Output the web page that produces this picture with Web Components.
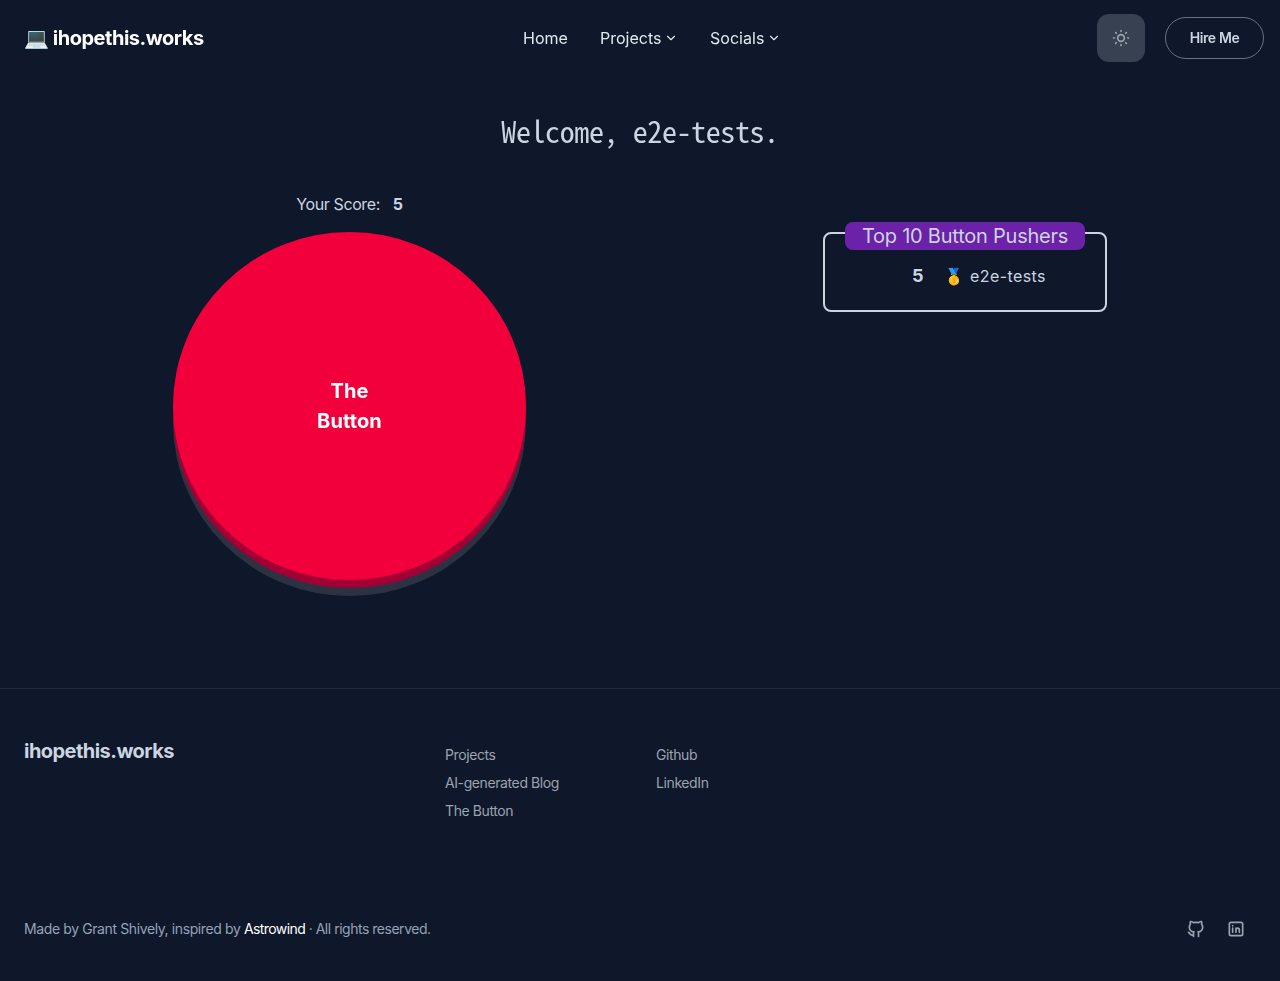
<!DOCTYPE html>
<html lang="en">
<head>
<meta charset="utf-8">
<title>The Button</title>
<style>
body{margin:0;background:#0f172a;color:#cbd5e1;font:16px/24px Inter,sans-serif;letter-spacing:-.4px}
</style>
</head>
<body>
<app-page></app-page>
<script>
const define=(name,html)=>customElements.define(name,class extends HTMLElement{
  constructor(){super();this.attachShadow({mode:'open'}).innerHTML=html}
});

define('nav-item',`<style>
:host{display:flex;align-items:center;padding:12px 16px;font-weight:400;letter-spacing:.02px;color:#e2e8f0}
svg{display:none;width:14px;height:14px;margin-left:2.5px;fill:none;stroke:currentColor;stroke-width:2;stroke-linecap:round;stroke-linejoin:round}
:host([menu]) svg{display:block}
</style><slot></slot><svg viewBox="0 0 24 24"><path d="m6 9 6 6 6-6"/></svg>`);

define('theme-toggle',`<style>
:host{display:flex;width:48px;height:48px;border-radius:12px;background:#374151;align-items:center;justify-content:center;color:#9ca3af}
svg{width:20px;height:20px;fill:none;stroke:currentColor;stroke-width:2;stroke-linecap:round;stroke-linejoin:round}
</style><svg viewBox="0 0 24 24"><circle cx="12" cy="12" r="4"/><path d="M3 12h1m8-9v1m8 8h1m-9 8v1M5.6 5.6l.7.7m12.1-.7-.7.7m0 11.4.7.7m-12.1-.7-.7.7"/></svg>`);

define('outline-button',`<style>
:host{display:flex;box-sizing:border-box;width:99px;height:42px;border:1px solid #64748b;border-radius:21px;align-items:center;justify-content:center;font-size:14px;line-height:20px;font-weight:600;color:#cbd5e1}
</style><slot></slot>`);

define('site-header',`<style>
:host{display:grid;grid-template-columns:483px auto 1fr;height:76px;align-items:center;padding:0 16px 0 24px;will-change:transform}
.brand{font-size:20px;line-height:28px;font-weight:700;letter-spacing:-.48px;color:#fff;white-space:pre}
nav{display:flex}
.actions{display:flex;justify-content:flex-end;align-items:center;gap:20px}
</style><div class="brand">💻 ihopethis.works</div>
<nav><nav-item>Home</nav-item><nav-item menu>Projects</nav-item><nav-item menu>Socials</nav-item></nav>
<div class="actions"><theme-toggle></theme-toggle><outline-button>Hire Me</outline-button></div>`);

define('page-title',`<style>
:host{display:block;text-align:center;font:400 30px/36px "Noto Sans Mono CJK JP","Noto Sans Mono CJK SC","Noto Sans Mono","DejaVu Sans Mono",monospace;will-change:transform}
</style><slot></slot>`);

define('score-line',`<style>
:host{display:flex;justify-content:center;gap:13px}
b{font-weight:700}
</style><span>Your Score:</span><b><slot></slot></b>`);

define('big-button',`<style>
:host{display:flex;box-sizing:border-box;width:353px;height:348px;border-radius:50%;background:#f2003c;box-shadow:0 8px 0 #a20034,0 16px 0 #2d3242;align-items:center;justify-content:center;text-align:center;color:#fff;font-size:20px;line-height:30px;font-weight:700;letter-spacing:.1px;will-change:transform}
</style><div><slot></slot></div>`);

define('score-board',`<style>
:host{display:flex;box-sizing:border-box;flex-direction:column;align-items:center;width:284px;height:80px;border:2px solid #cbd5e1;border-radius:8px;letter-spacing:.4px}
h2{box-sizing:border-box;width:240px;height:28px;margin:-12px 0 0;border-radius:8px;background:#6b21a8;text-align:center;font-size:20px;line-height:28px;font-weight:400;letter-spacing:-.23px}
.row{display:flex;align-items:center;align-self:flex-start;margin:14px 0 0 87px;height:24px}
b{font-size:18px;width:32px}
.row span{word-spacing:.8px}
</style><h2>Top 10 Button Pushers</h2><div class="row"><b>5</b><span>🥇 e2e-tests</span></div>`);

define('game-area',`<style>
:host{display:grid;grid-template-columns:631px 600px;padding:0 15px 0 34px}
.left{display:flex;flex-direction:column;align-items:center;gap:16px}
.right{display:flex;justify-content:center;align-items:flex-start;padding-top:40px}
</style><div class="left"><score-line>5</score-line><big-button>The<br>Button</big-button></div><div class="right"><score-board></score-board></div>`);

define('link-list',`<style>
:host{display:flex;flex-direction:column;gap:8px;font-size:14px;line-height:20px;color:#9ca3af}
</style><slot></slot>`);

const icons={
  github:'<path d="M9 19c-4.3 1.4-4.3-2.5-6-3m12 5v-3.500c0-1 .1-1.400-.5-2 2.800-.3 5.500-1.400 5.500-6a4.600 4.600 0 0 0-1.300-3.200 4.200 4.200 0 0 0-.1-3.200s-1.100-.3-3.500 1.300a12.300 12.300 0 0 0-6.200 0C6.500 2.800 5.400 3.100 5.400 3.100a4.200 4.200 0 0 0-.1 3.200A4.600 4.600 0 0 0 4 9.500c0 4.600 2.700 5.700 5.500 6-.6.6-.6 1.200-.5 2V21"/>',
  linkedin:'<rect x="4" y="4" width="16" height="16" rx="2"/><path d="M8 11v5m0-8v.01M12 16v-5m4 5v-3a2 2 0 0 0-4 0"/>'
};
customElements.define('social-icon',class extends HTMLElement{
  connectedCallback(){
    if(this.shadowRoot)return;
    this.attachShadow({mode:'open'}).innerHTML=`<style>
:host{display:flex;width:40px;height:40px;align-items:center;justify-content:center;color:#9ca3af}
svg{width:20px;height:20px;fill:none;stroke:currentColor;stroke-width:2;stroke-linecap:round;stroke-linejoin:round}
</style><svg viewBox="0 0 24 24">${icons[this.getAttribute('name')]}</svg>`;
  }
});

define('site-footer',`<style>
:host{display:block;border-top:1px solid #1e293b;padding:48px 24px 0}
.top{display:grid;grid-template-columns:421px 211px 1fr;height:144px}
.brand{font-size:20px;line-height:28px;font-weight:700;letter-spacing:-.54px}
link-list{margin-top:8px}
.bottom{display:flex;align-items:center;justify-content:space-between;margin-top:28px;font-size:14px;line-height:20px;letter-spacing:-.39px;color:#94a3b8}
.bottom a{color:#fff;letter-spacing:-.58px}
.rights{letter-spacing:-.48px}
.social{display:flex}
</style><div class="top"><div class="brand">ihopethis.works</div>
<link-list><span>Projects</span><span>AI-generated Blog</span><span>The Button</span></link-list>
<link-list><span>Github</span><span>LinkedIn</span></link-list></div>
<div class="bottom"><div>Made by Grant Shively, inspired by <a>Astrowind</a><span class="rights"> · All rights reserved.</span></div><div class="social"><social-icon name="github"></social-icon><social-icon name="linkedin"></social-icon></div></div>`);

define('app-page',`<style>
:host{display:flex;flex-direction:column;height:981px;overflow:hidden}
page-title{margin-top:36px}
game-area{margin-top:44px;height:496px}
</style><site-header></site-header><page-title>Welcome, e2e-tests.</page-title><game-area></game-area><site-footer></site-footer>`);
</script>
</body>
</html>
